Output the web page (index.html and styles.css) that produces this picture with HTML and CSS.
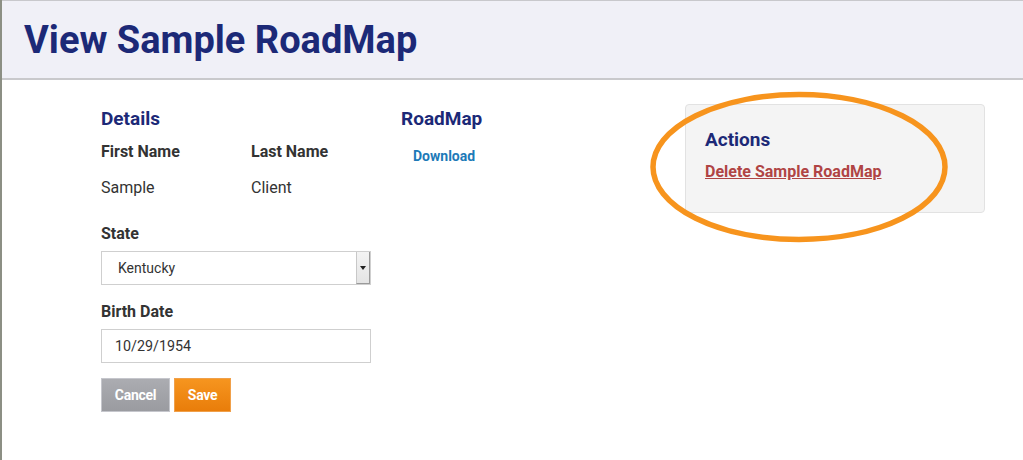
FILE: index.html
```html
<!DOCTYPE html>
<html lang="en">
<head>
<meta charset="utf-8">
<title>View Sample RoadMap</title>
<link rel="stylesheet" href="styles.css">
</head>
<body>
<div class="frame">
  <header class="page-header">
    <h1 class="page-title">View Sample RoadMap</h1>
  </header>
  <main class="content">
    <section class="details">
      <h2 class="section-title">Details</h2>
      <div class="name-grid">
        <div class="field-label">First Name</div>
        <div class="field-label">Last Name</div>
        <div class="field-value">Sample</div>
        <div class="field-value">Client</div>
      </div>
      <label class="field-label form-label">State</label>
      <div class="select-box">
        <span class="select-text">Kentucky</span>
        <span class="select-arrow"><span class="tri"></span></span>
      </div>
      <label class="field-label form-label">Birth Date</label>
      <div class="text-input">10/29/1954</div>
      <div class="buttons">
        <button class="btn btn-cancel">Cancel</button>
        <button class="btn btn-save">Save</button>
      </div>
    </section>
    <section class="roadmap">
      <h2 class="section-title">RoadMap</h2>
      <a class="download" href="#">Download</a>
    </section>
    <aside class="actions">
      <h2 class="section-title">Actions</h2>
      <a class="delete-link" href="#">Delete Sample RoadMap</a>
      <svg class="highlight" width="310" height="160" viewBox="0 0 310 160">
        <ellipse cx="155" cy="80" rx="146" ry="72.5" fill="none" stroke="#f7941d" stroke-width="5.5"/>
      </svg>
    </aside>
  </main>
</div>
</body>
</html>
```

FILE: styles.css
```css
* { box-sizing: border-box; }
html, body { margin: 0; padding: 0; }
body {
  width: 1023px;
  height: 460px;
  overflow: hidden;
  background: #ffffff;
  font-family: Roboto, "Liberation Sans", Arial, sans-serif;
  color: #333333;
}
.frame {
  height: 460px;
  border-left: 2px solid #8c8f84;
}
.page-header {
  height: 80px;
  background: #f0f0f7;
  border-top: 1px solid #c8c8cc;
  border-bottom: 2px solid #c9c9cc;
  padding: 17px 0 0 22px;
}
.page-title {
  margin: 0;
  font-size: 38px;
  line-height: 44px;
  font-weight: 700;
  color: #1c2977;
  letter-spacing: 0;
}
.content {
  display: flex;
  padding: 27px 0 0 99px;
}
.section-title {
  margin: 0;
  font-size: 19px;
  line-height: 24px;
  font-weight: 700;
  color: #1c2977;
}
.details { width: 270px; }
.name-grid {
  display: grid;
  grid-template-columns: 150px 120px;
  row-gap: 17px;
  margin-top: 11px;
}
.field-label {
  display: block;
  font-size: 16px;
  line-height: 19px;
  font-weight: 700;
  color: #333333;
}
.field-value {
  font-size: 16px;
  line-height: 19px;
  color: #333333;
}
.form-label { margin-top: 27px; }
.select-box {
  margin-top: 8px;
  height: 34px;
  border: 1px solid #cfcfcf;
  display: flex;
  align-items: center;
  justify-content: space-between;
  background: #ffffff;
}
.select-text {
  padding-left: 16px;
  font-size: 14px;
  color: #333333;
}
.select-arrow {
  width: 14px;
  height: 32px;
  background: linear-gradient(#f4f4f4, #e4e4e4);
  border-left: 1px solid #c8c8c8;
  border-right: 1px solid #9a9a9a;
  border-bottom: 1px solid #9a9a9a;
  display: flex;
  align-items: center;
  justify-content: center;
}
.tri {
  width: 0;
  height: 0;
  border-left: 3px solid transparent;
  border-right: 3px solid transparent;
  border-top: 4px solid #222222;
}
.select-box + .form-label { margin-top: 17px; }
.text-input {
  margin-top: 8px;
  height: 34px;
  border: 1px solid #cfcfcf;
  padding: 0 0 0 13px;
  font-size: 14.3px;
  line-height: 32px;
  color: #333333;
}
.buttons {
  display: flex;
  gap: 4px;
  margin-top: 15px;
}
.btn {
  height: 34px;
  border: 1px solid transparent;
  font-family: Roboto, "Liberation Sans", Arial, sans-serif;
  font-size: 14px;
  font-weight: 700;
  color: #ffffff;
  padding: 0;
  letter-spacing: -0.3px;
}
.btn-cancel {
  width: 69px;
  background: linear-gradient(#abacb1, #9a9ba0);
  border-color: #c5c6cc;
}
.btn-save {
  width: 57px;
  background: linear-gradient(#f6951f, #e97d0a);
  border-color: #f0a04a;
}
.roadmap {
  margin-left: 30px;
  width: 161px;
}
.download {
  display: inline-block;
  margin: 17px 0 0 12px;
  font-size: 14px;
  font-weight: 700;
  color: #1d7ab8;
  text-decoration: none;
}
.actions {
  position: relative;
  margin-left: 123px;
  margin-top: -3px;
  width: 300px;
  height: 109px;
  background: #f4f4f4;
  border: 1px solid #e2e2e2;
  border-radius: 4px;
  padding: 23px 0 0 19px;
}
.delete-link {
  display: inline-block;
  margin-top: 10px;
  font-size: 16px;
  font-weight: 700;
  color: #b04444;
  text-decoration: underline;
}
.highlight {
  position: absolute;
  left: -42px;
  top: -18px;
  overflow: visible;
  pointer-events: none;
}
```
